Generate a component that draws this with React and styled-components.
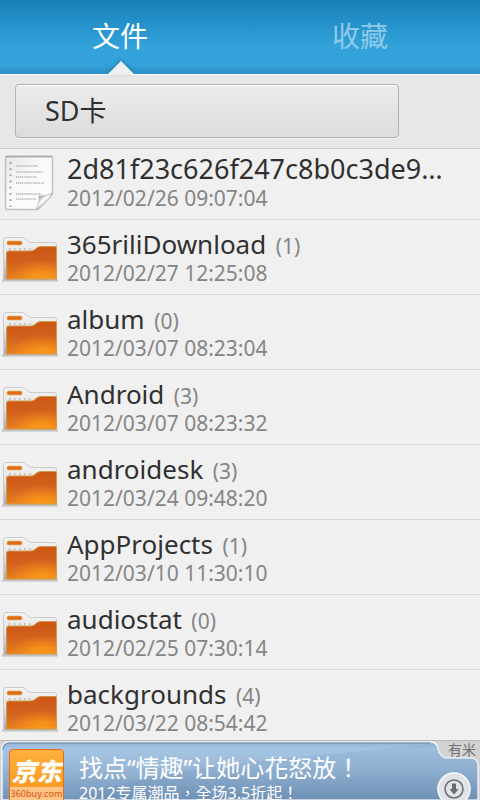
import React from "react";
import styled, { createGlobalStyle } from "styled-components";

const GlobalStyle = createGlobalStyle`
  * { box-sizing: border-box; }
  body {
    margin: 0;
    background: #f0f0f0;
    color: #303030;
    font-family: "Noto Sans", "Noto Sans CJK SC", sans-serif;
  }
  button { font: inherit; color: inherit; margin: 0; cursor: pointer; }
  ul { list-style: none; margin: 0; padding: 0; }
`;

const Screen = styled.div`
  display: flex;
  flex-direction: column;
  height: 100vh;
  overflow: hidden;
`;

const TabBar = styled.nav`
  display: flex;
  flex: none;
  height: 74px;
  background: linear-gradient(#1780b7 0, #2793cc 26px, #33a2db 48px, #34a3dc 65px, #2c8fc5 74px);
`;

const Tab = styled.button`
  position: relative;
  flex: 1;
  border: 0;
  padding: 0 0 2px;
  background: none;
  font-size: 28px;
  line-height: 40px;
  color: ${(p) => (p.$active ? "#ffffff" : "#8ecbea")};
`;

const Pointer = styled.svg`
  position: absolute;
  left: 50%;
  bottom: 0;
  margin-left: -13px;
  display: block;
  filter: drop-shadow(0 -1px 2px rgba(0, 50, 90, 0.35));
`;

const PathBar = styled.div`
  flex: none;
  padding: 9px 81px 10px 15px;
  border-top: 1px solid #ffffff;
  border-bottom: 1px solid #cccccc;
  background: #e7e7e7;
`;

const PathButton = styled.button`
  display: block;
  width: 100%;
  height: 54px;
  padding: 0 29px;
  border: 1px solid #b2b2b2;
  border-radius: 4px;
  background: linear-gradient(#ececec, #dcdcdc);
  box-shadow: inset 0 1px 0 #ffffff, 0 1px 0 #f3f3f3;
  text-align: left;
  font-size: 27px;
  line-height: 50px;
`;

const FileList = styled.ul`
  flex: 1 1 0;
  min-height: 0;
  overflow-y: auto;
  scrollbar-width: none;
`;

const FileItem = styled.li`
  border-bottom: 1px solid #d8d8d8;
`;

const FileButton = styled.button`
  display: flex;
  align-items: flex-end;
  width: 100%;
  height: ${(p) => (p.$clipped ? 70 : 74)}px;
  padding: 0 20px 9px 2px;
  border: 0;
  background: none;
  text-align: left;
`;

const IconBox = styled.span`
  flex: none;
  width: 65px;
  height: 56px;
`;

const FileText = styled.span`
  flex: 1;
  min-width: 0;
`;

const FileName = styled.span`
  display: block;
  overflow-x: clip;
  white-space: nowrap;
  text-overflow: ellipsis;
  font-size: ${(p) => (p.$folder ? 26 : 27)}px;
  line-height: 34px;
`;

const Count = styled.span`
  margin-left: 4px;
  font-size: 21px;
  line-height: 21px;
  color: #858585;
`;

const FileDate = styled.span`
  display: block;
  font-size: 21px;
  line-height: 24px;
  color: #858585;
`;

const AdBanner = styled.a`
  position: relative;
  display: flex;
  flex: none;
  height: 60px;
  padding: 8px 0 0 9px;
  border-top: 1px solid #b9b9b9;
  background: #d3d3d3;
  color: #ffffff;
  text-decoration: none;
  overflow: hidden;
`;

const AdPanel = styled.svg`
  position: absolute;
  inset: 0;
  width: 100%;
  height: 100%;
`;

const AdLogo = styled.span`
  position: relative;
  flex: none;
  display: flex;
  flex-direction: column;
  width: 55px;
  height: 55px;
  border: 1px solid #e86d18;
  border-radius: 4px;
  background: linear-gradient(#ffb03c, #f8941c);
  overflow: hidden;
  text-align: center;
`;

const LogoName = styled.span`
  flex: none;
  height: 37px;
  font-size: 25px;
  font-weight: 900;
  font-style: italic;
  line-height: 42px;
`;

const LogoSite = styled.span`
  flex: 1;
  background: #ffc687;
  color: #d9601e;
  font-size: 9px;
  font-weight: 500;
  line-height: 13px;
`;

const AdCopy = styled.span`
  position: relative;
  padding: 2px 0 0 15px;
  white-space: nowrap;
  font-family: "Noto Sans", "Noto Sans CJK TC", sans-serif;
`;

const AdTitle = styled.span`
  display: block;
  font-size: 24px;
  line-height: 33px;
`;

const AdDetail = styled.span`
  display: block;
  font-size: 16px;
  line-height: 18px;
`;

const AdSource = styled.span`
  position: absolute;
  top: 0;
  right: 4px;
  font-size: 14px;
  line-height: 17px;
  color: #707070;
`;

const AdDownload = styled.svg`
  position: absolute;
  top: 31px;
  right: 9px;
`;

function FolderIcon() {
  const dots = [];
  for (let y = 0; y < 5; y++) {
    for (let x = 0; x < 10; x++) dots.push([8 + x * 5, 28 + y * 5]);
  }
  const front = "M4.500 52V26Q4.500 24 6.500 24H29Q32 24 34 21.500Q36 19.500 39 19.500H53Q54.500 19.500 54.500 21V52Z";
  return (
    <svg width="57" height="57" viewBox="0 2 57 57" aria-hidden="true">
      <defs>
        <linearGradient id="folderBack" x1="0" y1="0" x2="0" y2="1">
          <stop offset="0" stopColor="#f4f4f4" />
          <stop offset="0.4" stopColor="#e6e6e6" />
          <stop offset="1" stopColor="#a9a9a9" />
        </linearGradient>
        <linearGradient id="folderFront" x1="0" y1="0" x2="0" y2="1">
          <stop offset="0" stopColor="#cd5612" />
          <stop offset="0.5" stopColor="#d2621f" />
          <stop offset="1" stopColor="#e87d1e" />
        </linearGradient>
        <radialGradient id="folderGlow" cx="0.7" cy="1.1" r="0.7">
          <stop offset="0" stopColor="#ff9d14" />
          <stop offset="0.4" stopColor="#f8941a" stopOpacity="0.9" />
          <stop offset="1" stopColor="#f08a1b" stopOpacity="0" />
        </radialGradient>
      </defs>
      <path d="M0 53.500H56" stroke="#9d9d9d" strokeWidth="2" opacity="0.6" />
      <path d="M1.500 53V13Q1.500 10.500 4 10.500H20Q22 10.500 23.500 12L28 15.500H52Q54.500 15.500 54.500 18V53Z" fill="url(#folderBack)" stroke="#cccccc" />
      <rect x="5" y="14" width="15" height="4" rx="1.500" fill="#de6d18" stroke="#e6b566" strokeWidth="0.700" />
      <path d="M7 22H32" stroke="#b4b4b4" strokeWidth="1.500" strokeDasharray="1.500 3.500" />
      <path d={front} fill="url(#folderFront)" />
      <path d={front} fill="url(#folderGlow)" stroke="#d09a48" strokeWidth="1" />
      {dots.map(([x, y]) => (
        <circle key={`${x}-${y}`} cx={x} cy={y} r="0.600" fill="#b94e12" opacity="0.200" />
      ))}
    </svg>
  );
}

function DocumentIcon() {
  const lines = [
    [14, 12, 22],
    [14, 18, 27],
    [14, 23, 21],
    [14, 29, 28],
    [14, 40, 26],
    [14, 45, 20],
  ];
  return (
    <svg width="57" height="57" viewBox="0 0 57 57" aria-hidden="true">
      <defs>
        <linearGradient id="paper" x1="0" y1="0" x2="1" y2="1">
          <stop offset="0" stopColor="#e4e7e4" />
          <stop offset="0.4" stopColor="#f7f9f7" />
          <stop offset="1" stopColor="#ffffff" />
        </linearGradient>
        <linearGradient id="curl" x1="0.200" y1="0.200" x2="0.800" y2="0.900">
          <stop offset="0" stopColor="#8f8f8f" />
          <stop offset="0.350" stopColor="#ffffff" />
          <stop offset="0.700" stopColor="#c4c4c4" />
          <stop offset="1" stopColor="#a0a0a0" />
        </linearGradient>
      </defs>
      <path d="M5 2.500H49Q50.500 2.500 50.500 4V40L36 55.500H5Q3.500 55.500 3.500 54V4Q3.500 2.500 5 2.500Z" fill="url(#paper)" stroke="#c0c2c0" strokeWidth="1.500" />
      <path d="M4 2.500H50" stroke="#a6a8a6" strokeWidth="1.500" />
      <path d="M8.500 8V53" stroke="#8e908e" strokeWidth="1.700" strokeDasharray="1.700 4.500" />
      {lines.map(([x, y, w]) => (
        <g key={y} fill="none" stroke="#8f918f">
          <path d={`M${x} ${y}h${w}`} strokeWidth="2" strokeDasharray="1 0.800 1.500 0.900 1.200 0.600 1 1.500" opacity="0.350" />
          <path d={`M${x} ${y}h${w}`} strokeWidth="1.200" opacity="0.250" />
        </g>
      ))}
      <path d="M34 55.500Q38 49 37 42Q43 43 50.500 39Q45 49 34 55.500Z" fill="url(#curl)" stroke="#b4b4b4" strokeWidth="0.800" />
    </svg>
  );
}

const files = [
  { name: "2d81f23c626f247c8b0c3de9…", date: "2012/02/26 09:07:04" },
  { name: "365riliDownload", count: 1, date: "2012/02/27 12:25:08" },
  { name: "album", count: 0, date: "2012/03/07 08:23:04" },
  { name: "Android", count: 3, date: "2012/03/07 08:23:32" },
  { name: "androidesk", count: 3, date: "2012/03/24 09:48:20" },
  { name: "AppProjects", count: 1, date: "2012/03/10 11:30:10" },
  { name: "audiostat", count: 0, date: "2012/02/25 07:30:14" },
  { name: "backgrounds", count: 4, date: "2012/03/22 08:54:42" },
];

function FileRow({ file, clipped }) {
  const isFolder = file.count !== undefined;
  return (
    <FileItem>
      <FileButton type="button" $clipped={clipped}>
        <IconBox>{isFolder ? <FolderIcon /> : <DocumentIcon />}</IconBox>
        <FileText>
          <FileName $folder={isFolder}>
            {file.name}
            {isFolder && <Count> ({file.count})</Count>}
          </FileName>
          <FileDate>{file.date}</FileDate>
        </FileText>
      </FileButton>
    </FileItem>
  );
}

function Ad() {
  return (
    <AdBanner href="#ad">
      <AdPanel viewBox="0 0 480 59" preserveAspectRatio="none" aria-hidden="true">
        <defs>
          <linearGradient id="adFill" x1="0" y1="0" x2="0" y2="1">
            <stop offset="0" stopColor="#8fb2d4" />
            <stop offset="0.120" stopColor="#a5c5e5" />
            <stop offset="0.400" stopColor="#9bbada" />
            <stop offset="1" stopColor="#7394b9" />
          </linearGradient>
        </defs>
        <path d="M2 59V8Q2 1 9 1H431Q437 1 438 8Q440 17 448 17H470Q478 17 478 25V59Z" fill="url(#adFill)" stroke="#eef2f7" strokeWidth="1.500" />
        <path d="M64 59Q160 30 250 21Q340 12 431 3Q437 4 438 8Q440 17 448 17H470Q478 17 478 25V59Z" fill="#4a749f" opacity="0.100" />
        <path d="M3 9Q3 2 10 2H430" fill="none" stroke="#6886a5" strokeWidth="1" />
      </AdPanel>
      <AdLogo>
        <LogoName>京东</LogoName>
        <LogoSite>360buy.com</LogoSite>
      </AdLogo>
      <AdCopy>
        <AdTitle>找点“情趣”让她心花怒放！</AdTitle>
        <AdDetail>2012专属潮品，全场3.5折起！</AdDetail>
      </AdCopy>
      <AdSource>有米</AdSource>
      <AdDownload width="34" height="34" viewBox="0 0 34 34" aria-hidden="true">
        <circle cx="17" cy="17" r="16" fill="#dfe2e6" stroke="#f8f9fa" strokeWidth="1.500" />
        <circle cx="17" cy="17" r="9" fill="none" stroke="#6b6b6b" strokeWidth="1.500" />
        <path d="M15 11.500H19V17H21.500L17 22.500L12.500 17H15Z" fill="#6b6b6b" />
      </AdDownload>
    </AdBanner>
  );
}

export default function App() {
  return (
    <>
      <GlobalStyle />
      <Screen>
        <TabBar>
          <Tab type="button" $active>
            文件
            <Pointer width="28" height="14" viewBox="0 0 28 14" aria-hidden="true">
              <path d="M1 14L14 1L27 14Z" fill="#f0f0f0" />
            </Pointer>
          </Tab>
          <Tab type="button">收藏</Tab>
        </TabBar>
        <PathBar>
          <PathButton type="button">SD卡</PathButton>
        </PathBar>
        <FileList>
          {files.map((file, i) => (
            <FileRow key={file.name} file={file} clipped={i === 0} />
          ))}
        </FileList>
        <Ad />
      </Screen>
    </>
  );
}
